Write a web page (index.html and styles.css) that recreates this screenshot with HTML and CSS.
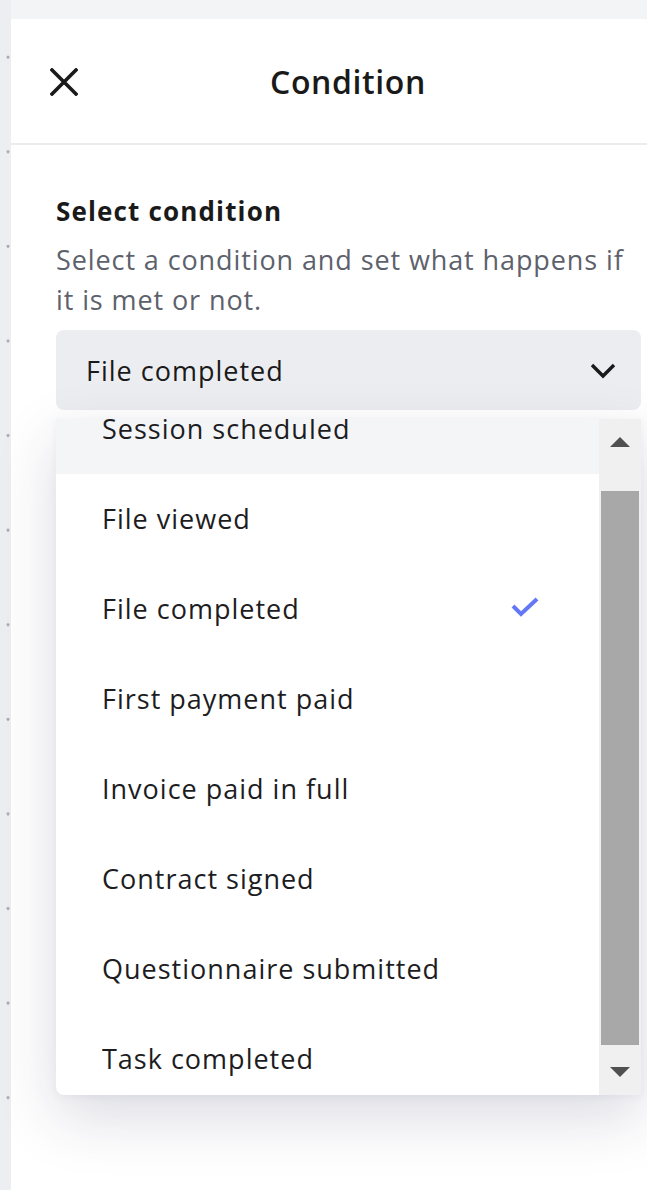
FILE: index.html
```html
<!DOCTYPE html>
<html lang="en">
<head>
<meta charset="utf-8">
<title>Condition</title>
<link rel="stylesheet" href="styles.css">
</head>
<body>
<div class="app">
  <aside class="rail"></aside>
  <main class="main">
    <div class="panel">
      <header class="panel-header">
        <button class="close" aria-label="Close">
          <svg width="28" height="28" viewBox="0 0 28 28"><path d="M2 2 L26 26 M26 2 L2 26" stroke="#1a1a1a" stroke-width="3.6" stroke-linecap="square" fill="none"/></svg>
        </button>
        <h1 class="title">Condition</h1>
      </header>
      <section class="panel-body">
        <h2 class="label">Select condition</h2>
        <p class="hint">Select a condition and set what happens if it is met or not.</p>
        <div class="select-wrap">
          <div class="select">
            <span>File completed</span>
            <svg class="chev" width="26" height="16" viewBox="0 0 26 16"><path d="M2 2 L13 13 L24 2" stroke="#1a1a1a" stroke-width="3.4" fill="none"/></svg>
          </div>
          <div class="dropdown">
            <div class="options-view">
              <ul class="options">
                <li class="option hover">Session scheduled</li>
                <li class="option">File viewed</li>
                <li class="option selected">File completed
                  <svg class="check" width="28" height="22" viewBox="0 0 28 22"><path d="M2 10 L10 18 L26 3" stroke="#6478f6" stroke-width="4" fill="none"/></svg>
                </li>
                <li class="option">First payment paid</li>
                <li class="option">Invoice paid in full</li>
                <li class="option">Contract signed</li>
                <li class="option">Questionnaire submitted</li>
                <li class="option">Task completed</li>
              </ul>
            </div>
            <div class="scrollbar">
              <div class="arrow up"></div>
              <div class="thumb-track"><div class="thumb"></div></div>
              <div class="arrow down"></div>
            </div>
          </div>
        </div>
      </section>
    </div>
  </main>
</div>
</body>
</html>
```

FILE: styles.css
```css
* { box-sizing: border-box; }
html, body { margin: 0; padding: 0; }
body {
  background: #f3f4f6;
  font-family: "Open Sans", Lato, sans-serif;
  color: #1a1a1a;
  overflow: hidden;
  width: 647px;
  height: 1190px;
}
.app {
  display: flex;
  height: 1190px;
}
.rail {
  width: 11px;
  flex: none;
  background-color: #eceef2;
  background-image: radial-gradient(circle at 8px 57px, #a9abb2 1.3px, transparent 1.8px);
  background-size: 11px 94.6px;
  background-repeat: repeat-y;
  background-position: 0 0;
}
.main {
  flex: none;
  padding-top: 19px;
}
.panel {
  width: 674px;
  height: 1171px;
  background: #fff;
}
.panel-header {
  height: 126px;
  border-bottom: 2px solid #ececec;
  display: flex;
  align-items: center;
  justify-content: center;
  position: relative;
}
.close {
  position: absolute;
  left: 39px;
  top: 49px;
  border: 0;
  padding: 0;
  background: none;
  width: 28px;
  height: 28px;
  display: flex;
}
.title {
  margin: 2px 0 0;
  font-size: 32px;
  font-weight: 600;
  line-height: 40px;
  letter-spacing: 0.6px;
}
.panel-body {
  padding: 49px 45px 0;
}
.label {
  margin: 0;
  font-size: 26px;
  font-weight: 700;
  line-height: 34px;
  letter-spacing: 1.15px;
}
.hint {
  margin: 12px 0 0;
  font-size: 27px;
  line-height: 40px;
  letter-spacing: 0.9px;
  color: #5d616c;
}
.select-wrap {
  position: relative;
  margin-top: 10px;
}
.select {
  height: 80px;
  width: 585px;
  background: #ecedf0;
  border-radius: 8px;
  display: flex;
  align-items: center;
  justify-content: space-between;
  padding: 0 25px 0 30px;
  font-size: 27px;
  letter-spacing: 1px;
}
.chev { margin-top: 2px; }
.dropdown {
  position: absolute;
  top: 89px;
  left: 0;
  width: 585px;
  height: 676px;
  background: #fff;
  border-radius: 0 0 0 8px;
  box-shadow: 0 22px 60px rgba(40, 40, 90, 0.17), 0 2px 8px rgba(40, 40, 90, 0.05);
  display: flex;
  overflow: hidden;
}
.options-view {
  flex: 1;
  overflow: hidden;
}
.options {
  list-style: none;
  margin: -35px 0 0;
  padding: 0;
}
.option {
  height: 90px;
  display: flex;
  align-items: center;
  justify-content: space-between;
  padding: 0 60px 0 46px;
  font-size: 27px;
  line-height: 18px;
  letter-spacing: 1px;
  color: #1d1d1f;
}
.option.hover { background: #f4f5f7; }
.check { margin-top: -4px; }
.scrollbar {
  width: 42px;
  flex: none;
  background: #f0f0f0;
  display: flex;
  flex-direction: column;
  align-items: center;
}
.arrow {
  width: 0;
  height: 0;
  border-left: 10px solid transparent;
  border-right: 10px solid transparent;
}
.arrow.up {
  border-bottom: 10px solid #505050;
  margin-top: 18px;
}
.arrow.down {
  border-top: 10px solid #505050;
  margin-bottom: 18px;
}
.thumb-track {
  flex: 1;
  width: 100%;
  padding: 44px 2px 22px;
}
.thumb {
  height: 100%;
  background: #a8a8a8;
}
```
